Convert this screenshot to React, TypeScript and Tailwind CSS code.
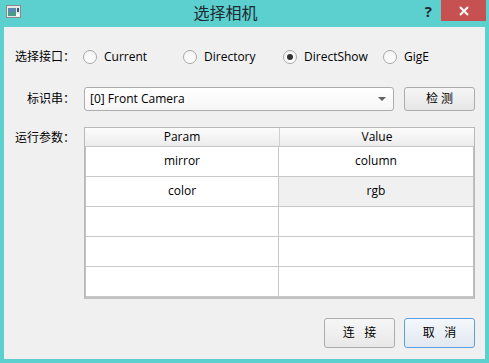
import React from 'react';

const font = "font-['Open_Sans','Noto_Sans_CJK_SC',sans-serif]";

const interfaces = [
  { name: 'Current', checked: false },
  { name: 'Directory', checked: false },
  { name: 'DirectShow', checked: true },
  { name: 'GigE', checked: false },
];

const rows = [
  { param: 'mirror', value: 'column' },
  { param: 'color', value: 'rgb' },
  { param: '', value: '' },
  { param: '', value: '' },
  { param: '', value: '' },
];

function Radio({ label, checked }: { label: string; checked: boolean }) {
  return (
    <div className="w-[100px] flex items-center gap-[7px]">
      <span className="w-[14px] h-[14px] rounded-full border border-[#a8a8a8] bg-gradient-to-b from-[#f4f4f4] to-[#ffffff] flex items-center justify-center">
        {checked && <span className="w-[6px] h-[6px] rounded-full bg-[#333333]" />}
      </span>
      <span className="text-[12px] text-black leading-none">{label}</span>
    </div>
  );
}

function WinIcon() {
  return (
    <svg width="16" height="14" viewBox="0 0 16 14">
      <rect x="0.5" y="0.5" width="14" height="12" fill="#e8e8e8" stroke="#8c8c8c" />
      <rect x="2" y="3" width="8" height="8" fill="#4a9a8a" />
      <rect x="2" y="3" width="8" height="4" fill="#5a8ab0" />
      <rect x="11" y="3" width="2" height="4" fill="#2a5a70" />
      <rect x="10" y="9" width="3" height="2" fill="#ffffff" />
    </svg>
  );
}

function Label({ text, className = '' }: { text: string; className?: string }) {
  return (
    <div className={`w-[73px] shrink-0 whitespace-nowrap text-right pr-[9px] ${className}`}>{text}</div>
  );
}

export default function App() {
  return (
    <div className={`w-[489px] h-[363px] bg-[#5ccfcf] flex flex-col ${font}`}>
      {/* Title bar */}
      <div className="h-[27px] flex items-start relative">
        <div className="pl-[6px] pt-[5px]">
          <WinIcon />
        </div>
        <div className="flex-1 text-center text-[16px] leading-[27px] text-[#1e2a30] pl-[4px]">选择相机</div>
        <div className="text-[15px] font-bold text-[#1f2a30] leading-[22px] mr-[9px]">?</div>
        <div className="w-[45px] h-[21px] bg-[#c75050] flex items-center justify-center mr-[3px]">
          <svg width="10" height="10" viewBox="0 0 10 10">
            <path d="M1 1 L9 9 M9 1 L1 9" stroke="#ffffff" strokeWidth="2" />
          </svg>
        </div>
      </div>

      {/* Content */}
      <div className="flex-1 mx-[4px] mb-[4px] bg-[#f0f0f0] pt-[20px] pl-[7px] pr-[10px] flex flex-col text-[12px] text-black">
        <div className="flex items-center h-[20px]">
          <Label text="选择接口：" />
          <div className="flex -ml-[1px]">
            {interfaces.map((it) => (
              <Radio key={it.name} label={it.name} checked={it.checked} />
            ))}
          </div>
        </div>

        <div className="flex items-center h-[24px] mt-[20px]">
          <Label text="标识串：" />
          <div className="w-[310px] h-[24px] border border-[#acacac] rounded-[3px] bg-gradient-to-b from-[#ffffff] to-[#f6f6f6] flex items-center pl-[5px] pr-[7px]">
            <span className="flex-1">[0] Front Camera</span>
            <span className="w-0 h-0 border-l-[4px] border-r-[4px] border-t-[4px] border-l-transparent border-r-transparent border-t-[#606060]" />
          </div>
          <button className="ml-[10px] w-[71px] h-[24px] border border-[#acacac] rounded-[3px] bg-gradient-to-b from-[#f6f6f6] to-[#e6e6e6] text-[12px]">
            检&nbsp;测
          </button>
        </div>

        <div className="flex mt-[16px]">
          <Label text="运行参数：" className="pt-[2px]" />
          <div className="w-[391px] border border-[#b8b8b8] border-b-2 border-b-[#c0c0c0] bg-white">
            <div className="h-[19px] flex bg-gradient-to-b from-[#fcfcfc] to-[#ececec] border-b border-[#c6c6c6] leading-[18px]">
              <div className="w-[195px] text-center border-r border-[#d0d0d0]">Param</div>
              <div className="flex-1 text-center">Value</div>
            </div>
            <div className="border-l border-r border-[#c0c0c0]">
              {rows.map((r, i) => (
                <div key={i} className="h-[30px] flex border-b border-[#c8c8c8]">
                  <div className="w-[193px] border-r border-[#c8c8c8] flex items-center justify-center pb-[2px]">
                    {r.param}
                  </div>
                  <div
                    className={`flex-1 flex items-center justify-center pb-[2px] ${
                      i === 1 ? 'bg-[#f0f0f0]' : 'bg-white'
                    }`}
                  >
                    {r.value}
                  </div>
                </div>
              ))}
            </div>
          </div>
        </div>

        <div className="flex justify-end gap-[9px] mt-[19px]">
          <button className="w-[71px] h-[30px] border border-[#acacac] rounded-[3px] bg-gradient-to-b from-[#f6f6f6] to-[#e8e8e8] text-[12px]">
            连&nbsp;&nbsp;&nbsp;接
          </button>
          <button className="w-[71px] h-[30px] border border-[#5c9fe0] rounded-[3px] bg-gradient-to-b from-[#f4f8fc] to-[#e2e8f0] text-[12px]">
            取&nbsp;&nbsp;&nbsp;消
          </button>
        </div>
      </div>
    </div>
  );
}
